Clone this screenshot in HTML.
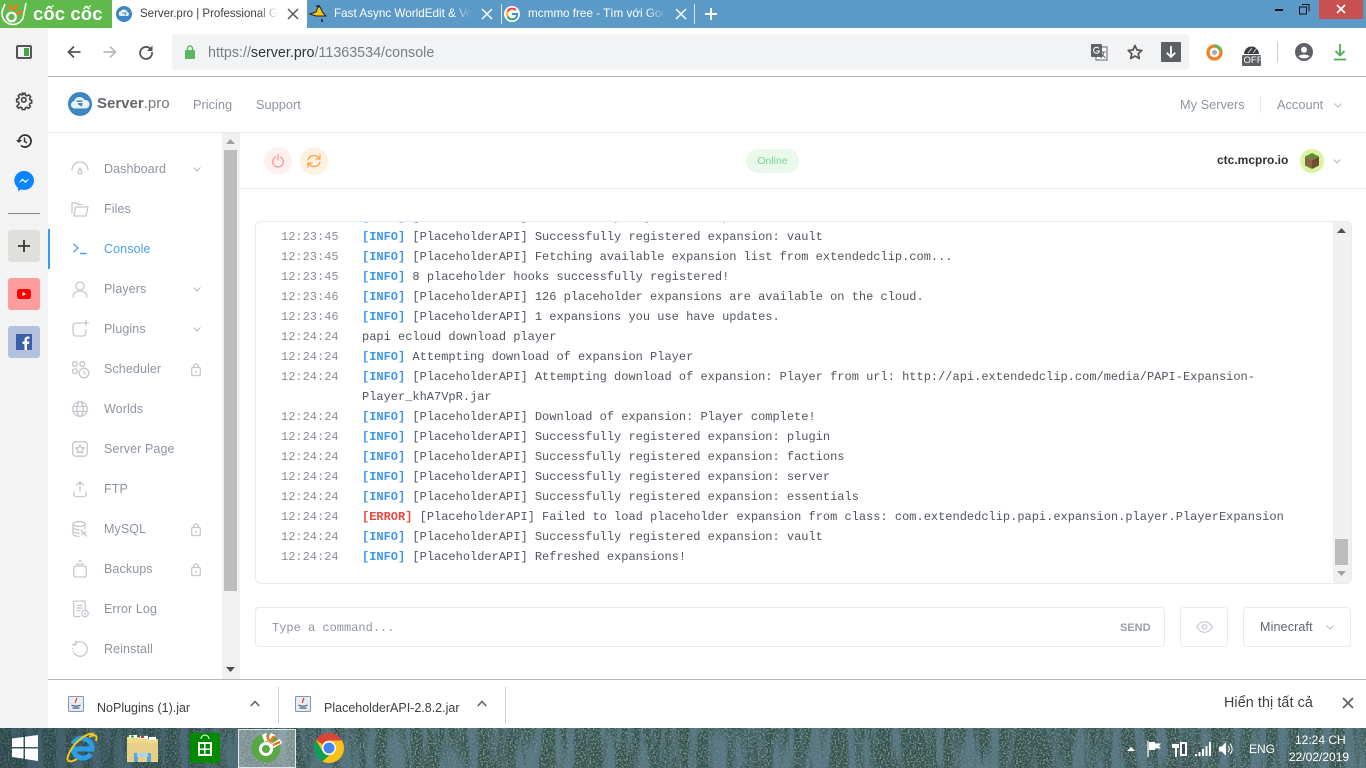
<!DOCTYPE html>
<html><head><meta charset="utf-8"><title>Server.pro</title>
<style>
html,body{margin:0;padding:0;width:1366px;height:768px;overflow:hidden;background:#fff;font-family:"Liberation Sans","Noto Sans CJK SC",sans-serif}
.a{position:absolute}
.t{position:absolute;white-space:pre;line-height:20px}
svg{position:absolute;overflow:visible}
.nav{position:absolute;left:104px;font-size:12.5px;line-height:20px;color:#8d95a0;white-space:pre;letter-spacing:.1px}
.i{fill:none;stroke:#c3c8cf;stroke-width:1.3;stroke-linecap:round;stroke-linejoin:round}
.ln{position:absolute;left:281px;font:12px/20px "Liberation Mono",monospace;white-space:pre;color:#50565e}
.ln u{text-decoration:none;color:#8a8f96;display:inline-block;width:81px}
.ln b{color:#3a97ee}
.ln i{font-style:normal;font-weight:bold;color:#e8483f}
</style></head><body>

<!-- tab strip -->
<div class="a" style="left:0;top:0;width:1366px;height:28px;background:#5b9ac6"></div>
<div class="a" style="left:0;top:0;width:112px;height:28px;background:#5fba4b"></div>
<svg style="left:0;top:0" width="30" height="28" viewBox="0 0 30 28">
<path d="M3 9A10.500 10.500 0 1 0 23 18L26 3" fill="none" stroke="#fff" stroke-width="1.600"/>
<path d="M3 9L5 4" fill="none" stroke="#fff" stroke-width="1.600"/>
<circle cx="11.500" cy="17" r="4.300" fill="none" stroke="#fff" stroke-width="2.200"/>
<path d="M9.500 4l1.800 6M17 4l-3 6M22 11l-6 3" stroke="#f47a20" stroke-width="2.600"/>
</svg>
<div class="t" style="left:33px;top:4px;font-size:18.500px;font-weight:bold;color:#fff;letter-spacing:.1px">cốc cốc</div>

<div class="a" style="left:112px;top:0;width:195px;height:28px;background:#fff"></div>
<svg style="left:116px;top:6px" width="16" height="16" viewBox="0 0 16 16"><circle cx="8" cy="8" r="8" fill="#3c86c4"/><path d="M4 10a2.500 2.500 0 0 1 .6-4.600A3.600 3.600 0 0 1 11 5.600 2.500 2.500 0 0 1 12 10z" fill="#e8f0f6"/><path d="M6 7h4l-1 2.500" stroke="#3c86c4" fill="none"/></svg>
<div class="t" style="left:140px;top:4px;font-size:11.500px;color:#3c4043;width:139px;overflow:hidden;-webkit-mask-image:linear-gradient(90deg,#000 118px,transparent 138px)">Server.pro | Professional Game</div>
<svg style="left:288px;top:9px" width="10" height="10" viewBox="0 0 10 10"><path d="M0 0L10 10M10 0L0 10" stroke="#555" stroke-width="1.500"/></svg>

<svg style="left:310px;top:5px" width="16" height="18" viewBox="0 0 16 18"><path d="M0 9l6-2 2-5h2l3 6 3 3H6z" fill="#f2c811" stroke="#222" stroke-width="1"/><path d="M10 1H6M12 14v3" stroke="#223" stroke-width="1.500"/></svg>
<div class="t" style="left:334px;top:4px;font-size:11.700px;color:#fff;width:138px;overflow:hidden;-webkit-mask-image:linear-gradient(90deg,#000 118px,transparent 138px)">Fast Async WorldEdit &amp; Voxel</div>
<svg style="left:482px;top:9px" width="10" height="10" viewBox="0 0 10 10"><path d="M0 0L10 10M10 0L0 10" stroke="#fff" stroke-width="1.500"/></svg>
<div class="a" style="left:501px;top:4px;width:1px;height:20px;background:#d7e6f1"></div>

<svg style="left:504px;top:6px" width="16" height="16" viewBox="0 0 16 16"><circle cx="8" cy="8" r="8" fill="#fff"/><path d="M12 4.200A5.200 5.200 0 0 0 3.600 5.500" stroke="#ea4335" stroke-width="2" fill="none"/><path d="M3.600 5.500a5.200 5.200 0 0 0 0 5" stroke="#fbbc05" stroke-width="2" fill="none"/><path d="M3.600 10.500a5.200 5.200 0 0 0 8.400 1.300" stroke="#34a853" stroke-width="2" fill="none"/><path d="M8 8h5a5 5 0 0 1-1 3.800" stroke="#4285f4" stroke-width="2" fill="none"/></svg>
<div class="t" style="left:528px;top:4px;font-size:11.700px;color:#fff;width:138px;overflow:hidden;-webkit-mask-image:linear-gradient(90deg,#000 118px,transparent 138px)">mcmmo free - Tìm với Google</div>
<svg style="left:676px;top:9px" width="10" height="10" viewBox="0 0 10 10"><path d="M0 0L10 10M10 0L0 10" stroke="#fff" stroke-width="1.500"/></svg>
<div class="a" style="left:694px;top:4px;width:1px;height:20px;background:#d7e6f1"></div>
<svg style="left:705px;top:8px" width="12" height="12" viewBox="0 0 12 12"><path d="M6 0V12M0 6H12" stroke="#fff" stroke-width="2"/></svg>

<!-- window controls -->
<div class="a" style="left:1275px;top:9px;width:8px;height:2px;background:#111"></div>
<svg style="left:1299px;top:4px" width="11" height="11" viewBox="0 0 11 11"><path d="M3 .5h7v7M.5 3h7v7h-7z" fill="none" stroke="#111"/></svg>
<div class="a" style="left:1319px;top:0;width:44px;height:19px;background:#c75050"></div>
<svg style="left:1337px;top:5px" width="8" height="8" viewBox="0 0 8 8"><path d="M0 0L8 8M8 0L0 8" stroke="#fff" stroke-width="1.600"/></svg>

<!-- left rail -->
<div class="a" style="left:0;top:28px;width:48px;height:700px;background:#f3f3f3"></div>
<svg style="left:16px;top:45px" width="16" height="14" viewBox="0 0 16 14"><rect x="1" y="1" width="14" height="12" rx="1" fill="none" stroke="#555" stroke-width="2"/><rect x="8" y="3" width="5" height="8" fill="#3fa548"/></svg>
<svg style="left:16px;top:93px" width="16" height="16" viewBox="0 0 24 24"><path d="M12 8.500a3.500 3.500 0 1 0 0 7 3.500 3.500 0 0 0 0-7zM10 2h4l.6 3 2.400 1 2.600-1.600 2.800 2.800L20.800 10l.9 2.200 2.300.6v4l-2.600.6-1 2.400 1.500 2.400-2.800 2.800-2.600-1.600-2.300 1-.6 2.600h-4l-.6-2.800-2.400-1-2.500 1.600-2.800-2.800L4.800 18l-1-2.400L1 15v-4l2.800-.6 1-2.300L3.400 5.800l2.800-2.800 2.500 1.600 2.400-1z" transform="translate(0 -1.500) scale(.98)" fill="none" stroke="#444" stroke-width="2.400"/></svg>
<svg style="left:16px;top:133px" width="16" height="16" viewBox="0 0 16 16"><path d="M3 8a6 6 0 1 1 2 4.500" fill="none" stroke="#333" stroke-width="1.800"/><path d="M0 7l3 3 3-3z" fill="#333"/><path d="M8.500 4.500V8.500L11 10" fill="none" stroke="#333" stroke-width="1.400"/></svg>
<svg style="left:14px;top:171px" width="20" height="20" viewBox="0 0 20 20"><path d="M10 0a10 9.500 0 0 1 0 19l-3-.5-3 1.500v-3A9.500 9.500 0 0 1 10 0z" fill="#0a84ff"/><path d="M4.500 12l4-4.500 2.500 2.500 4.500-2.500-4 4.500-2.500-2.500z" fill="#fff"/></svg>
<div class="a" style="left:8px;top:213px;width:32px;height:1px;background:#8a8a8a"></div>
<div class="a" style="left:8px;top:230px;width:32px;height:32px;border-radius:3px;background:#dfdfdb"></div>
<svg style="left:18px;top:240px" width="12" height="12" viewBox="0 0 12 12"><path d="M6 0V12M0 6H12" stroke="#333" stroke-width="1.800"/></svg>
<div class="a" style="left:8px;top:278px;width:32px;height:32px;border-radius:3px;background:#fd9d9d"></div>
<svg style="left:17px;top:289px" width="14" height="10" viewBox="0 0 14 10"><rect width="14" height="10" rx="2.500" fill="#f00"/><path d="M5.500 3v4l3.500-2z" fill="#fff"/></svg>
<div class="a" style="left:8px;top:326px;width:32px;height:32px;border-radius:3px;background:#b3c1dd"></div>
<svg style="left:16px;top:334px" width="16" height="16" viewBox="0 0 16 16"><rect width="16" height="16" fill="#3b5ea8"/><path d="M11 16V10h2l.4-2.500H11V6c0-.8.300-1.200 1.200-1.200h1.300V2.600c-.6-.1-1.200-.1-1.900-.1C10 2.500 8.500 3.700 8.500 5.800v1.700h-2V10h2v6z" fill="#fff"/></svg>

<!-- toolbar -->
<svg style="left:67px;top:45px" width="14" height="14" viewBox="0 0 14 14"><path d="M13.500 7H1.500M7 1.500L1.500 7 7 12.500" fill="none" stroke="#555" stroke-width="1.800"/></svg>
<svg style="left:103px;top:45px" width="14" height="14" viewBox="0 0 14 14"><path d="M.5 7h12M7 1.500L12.500 7 7 12.500" fill="none" stroke="#bbb" stroke-width="1.800"/></svg>
<svg style="left:139px;top:45px" width="14" height="14" viewBox="0 0 14 14"><path d="M12 4.500A6 6 0 1 0 13 7" fill="none" stroke="#555" stroke-width="1.800"/><path d="M13.500 .5V6H8z" fill="#555"/></svg>
<div class="a" style="left:172px;top:34px;width:1017px;height:36px;border-radius:4px;background:#f1f3f4"></div>
<svg style="left:185px;top:45px" width="10" height="14" viewBox="0 0 10 14"><rect y="5" width="10" height="9" rx="1" fill="#5cb85c"/><path d="M2.500 5.500V3.500a2.500 2.500 0 0 1 5 0v2" fill="none" stroke="#5cb85c" stroke-width="1.400"/></svg>
<div class="t" style="left:208px;top:43px;font-size:14.300px;color:#7b7f84"><span style="color:#7b7f84">https://</span><span style="color:#33373b">server.pro</span>/11363534/console</div>
<svg style="left:1091px;top:44px" width="17" height="17" viewBox="0 0 17 17"><rect x="5" y="3" width="11" height="13" fill="#fff" stroke="#5f6368"/><rect x="0" y="0" width="11" height="13" rx="1" fill="#5f6368"/><path d="M8 4.500A3 3 0 1 0 8.500 7H5.500" fill="none" stroke="#fff" stroke-width="1"/><path d="M10 8h5M12.500 8c0 3-1.500 5-3 6M11 10.500l3.500 3.500" fill="none" stroke="#5f6368"/></svg>
<svg style="left:1127px;top:44px" width="16" height="16" viewBox="0 0 16 16"><path d="M8 1.500l2 4.500 4.800.5-3.600 3.200 1.100 4.800L8 12l-4.300 2.500 1.100-4.800L1.200 6.500 6 6z" fill="none" stroke="#555" stroke-width="1.700" stroke-linejoin="round"/></svg>
<div class="a" style="left:1161px;top:42px;width:20px;height:20px;background:#5c5f64;border-radius:1px"></div>
<svg style="left:1166px;top:46px" width="10" height="12" viewBox="0 0 10 12"><path d="M5 0V11M.8 6.800L5 11 9.200 6.800" fill="none" stroke="#fff" stroke-width="1.800"/></svg>
<svg style="left:1206px;top:44px" width="17" height="17" viewBox="0 0 17 17"><circle cx="8.500" cy="8.500" r="6.500" fill="none" stroke="#f47f20" stroke-width="3.200"/><path d="M8.500 2a6.500 6.500 0 0 1 6 4" fill="none" stroke="#5cb85c" stroke-width="3.200"/><circle cx="8.500" cy="8.500" r="2.500" fill="#aaa"/></svg>
<svg style="left:1242px;top:43px" width="19" height="24" viewBox="0 0 19 24"><path d="M2 11a7.500 7.500 0 0 1 15 0z" fill="#3a3d40"/><path d="M6 10l4-5M11 10l4-5" stroke="#ddd"/><rect x="0" y="12" width="19" height="11" rx="1" fill="#5c5f64"/></svg>
<div class="t" style="left:1243.500px;top:55px;font-size:9.500px;line-height:12px;color:#fff">OFF</div>
<div class="a" style="left:1277px;top:42px;width:1px;height:20px;background:#ccc"></div>
<svg style="left:1295px;top:43px" width="18" height="18" viewBox="0 0 18 18"><circle cx="9" cy="9" r="9" fill="#5f6368"/><circle cx="9" cy="6.800" r="3" fill="#fff"/><path d="M3.500 13.500c1.500-2.500 9.500-2.500 11 0-2.500 2.500-8.500 2.500-11 0z" fill="#fff"/></svg>
<svg style="left:1334px;top:44px" width="12" height="17" viewBox="0 0 12 17"><path d="M6 0V11M1.500 7L6 11.500 10.500 7" fill="none" stroke="#4caf50" stroke-width="1.800"/><path d="M0 15.500H12" stroke="#4caf50" stroke-width="1.800"/></svg>
<div class="a" style="left:48px;top:76px;width:1318px;height:1px;background:#b7b7b7"></div>

<!-- page header -->
<svg style="left:68px;top:92px" width="24" height="24" viewBox="0 0 24 24"><circle cx="12" cy="12" r="12" fill="#3c86c4"/><path d="M6 16.500a3.800 3.800 0 0 1 .3-7.500A5.500 5.500 0 0 1 16.500 8a4.300 4.300 0 0 1 1.500 8.500z" fill="#e9f1f7"/><path d="M8 8.500h7l-1 1.500H9zM10 11h4.500l-.5 3.500-4-2z" fill="#3c86c4"/></svg>
<div class="t" style="left:97px;top:94px;font-size:15px;color:#666b70"><b style="color:#63686d">Server</b><span style="color:#777">.pro</span></div>
<div class="t" style="left:193px;top:95px;font-size:12.800px;color:#8d95a0">Pricing</div>
<div class="t" style="left:256px;top:95px;font-size:12.800px;color:#8d95a0">Support</div>
<div class="t" style="left:1180px;top:95px;font-size:12.800px;color:#8d95a0">My Servers</div>
<div class="a" style="left:1260px;top:97px;width:1px;height:16px;background:#e6e8eb"></div>
<div class="t" style="left:1277px;top:95px;font-size:12.800px;color:#8d95a0">Account</div>
<svg style="left:1334px;top:103px" width="8" height="5" viewBox="0 0 8 5"><path d="M.5.500L4 4 7.500.5" fill="none" stroke="#b5bac1"/></svg>
<div class="a" style="left:48px;top:132px;width:1318px;height:1px;background:#e9ebee"></div>

<!-- sidebar -->
<div class="a" style="left:222px;top:133px;width:18px;height:547px;background:#f1f1f1"></div>
<div class="a" style="left:224px;top:150px;width:13px;height:441px;background:#bdbdbd"></div>
<svg style="left:226px;top:139px" width="9" height="5" viewBox="0 0 9 5"><path d="M0 5L4.500 0 9 5z" fill="#a3a3a3"/></svg>
<svg style="left:226px;top:667px" width="9" height="5" viewBox="0 0 9 5"><path d="M0 0L4.500 5 9 0z" fill="#505050"/></svg>
<div class="a" style="left:48px;top:229px;width:2px;height:40px;background:#3b99f0"></div>

<svg style="left:71px;top:160px" width="18" height="18" viewBox="0 0 18 18"><g class="i"><path d="M1 10a8 8 0 0 1 16 0"/><path d="M9 8l-1.800 4a1.800 1.800 0 1 0 3.600 0z"/></g></svg>
<div class="nav" style="top:159px">Dashboard</div>
<svg style="left:71px;top:201px" width="18" height="16" viewBox="0 0 18 16"><g class="i"><path d="M1 12V2h5l1 1.500h4"/><path d="M3 15L4.500 6H17l-2 9z"/></g></svg>
<div class="nav" style="top:199px">Files</div>
<svg style="left:73px;top:243px" width="14" height="12" viewBox="0 0 14 12"><path d="M.5 1L5 5 .5 9" fill="none" stroke="#4aa0f2" stroke-width="1.300"/><path d="M7 10.500h6.500" stroke="#4aa0f2" stroke-width="1.500"/></svg>
<div class="nav" style="top:239px;color:#4aa0f2">Console</div>
<svg style="left:72px;top:281px" width="16" height="16" viewBox="0 0 16 16"><g class="i"><circle cx="8" cy="5" r="4"/><path d="M1 16c0-4 3-6 7-6s7 2 7 6"/></g></svg>
<div class="nav" style="top:279px">Players</div>
<svg style="left:72px;top:320px" width="18" height="17" viewBox="0 0 18 17"><g class="i"><path d="M10 3H4a3 3 0 0 0-3 3v7a3 3 0 0 0 3 3h7a3 3 0 0 0 3-3v-3"/><path d="M14 .5v5M11.500 3h5"/></g></svg>
<div class="nav" style="top:319px">Plugins</div>
<svg style="left:72px;top:361px" width="18" height="18" viewBox="0 0 18 18"><g class="i"><rect x=".7" y=".7" width="4.500" height="4.500" rx="1.500"/><rect x="8" y=".7" width="4.500" height="4.500" rx="1.500"/><rect x=".7" y="8" width="4.500" height="4.500" rx="1.500"/><circle cx="12" cy="12" r="4.800"/><path d="M12 10v2l1.500 1"/></g></svg>
<div class="nav" style="top:359px">Scheduler</div>
<svg style="left:72px;top:401px" width="16" height="16" viewBox="0 0 16 16"><g class="i"><circle cx="8" cy="8" r="7.300"/><ellipse cx="8" cy="8" rx="3.200" ry="7.300"/><path d="M1 5.500h14M1 10.500h14"/></g></svg>
<div class="nav" style="top:399px">Worlds</div>
<svg style="left:72px;top:441px" width="16" height="16" viewBox="0 0 16 16"><g class="i"><rect x=".7" y=".7" width="14.500" height="14.500" rx="3"/><path d="M8 3.500l1.300 3 3.200.3-2.400 2.200.7 3.200L8 10.500l-2.800 1.700.7-3.200-2.400-2.200 3.200-.3z"/></g></svg>
<div class="nav" style="top:439px">Server Page</div>
<svg style="left:73px;top:481px" width="14" height="16" viewBox="0 0 14 16"><g class="i"><path d="M7 10V1M3.500 4L7 .7 10.500 4"/><path d="M1 11v2.500a2 2 0 0 0 2 2h8a2 2 0 0 0 2-2V11"/></g></svg>
<div class="nav" style="top:479px">FTP</div>
<svg style="left:72px;top:521px" width="16" height="16" viewBox="0 0 16 16"><g class="i"><ellipse cx="7" cy="3" rx="6" ry="2.300"/><path d="M1 3v10c0 1.300 2.700 2.300 6 2.300M13 3v5M1 6.500c0 1.300 2.700 2.300 6 2.300M1 10c0 1.300 2.700 2.300 6 2.300M9 9l5.500 6M10 13l4-2"/></g></svg>
<div class="nav" style="top:519px">MySQL</div>
<svg style="left:73px;top:560px" width="14" height="18" viewBox="0 0 14 18"><g class="i"><rect x=".8" y="6" width="12.500" height="11" rx="2"/><path d="M3.500 4H10.500M5.500 1H8.500"/></g></svg>
<div class="nav" style="top:559px">Backups</div>
<svg style="left:73px;top:600px" width="16" height="18" viewBox="0 0 16 18"><g class="i"><path d="M4 1H2a1.300 1.300 0 0 0-1.300 1.300v13A1.300 1.300 0 0 0 2 16.500h5M9 1h2a1.300 1.300 0 0 1 1.300 1.300V9"/><path d="M5 1h1M7.500 1h.5M4 5.500h5M4 8h5M4 10.500h3"/><circle cx="12" cy="13.500" r="3.300"/><path d="M12 12.500v2"/></g></svg>
<div class="nav" style="top:599px">Error Log</div>
<svg style="left:72px;top:641px" width="16" height="16" viewBox="0 0 16 16"><g class="i"><path d="M2.500 3.500A7.200 7.200 0 1 1 2 12"/><path d="M4 0v3.800H.5M.7 7.500H1M1 10H1.200"/></g></svg>
<div class="nav" style="top:639px">Reinstall</div>

<svg style="left:193px;top:167px" width="8" height="5" viewBox="0 0 8 5"><path d="M.5.500L4 4 7.500.5" fill="none" stroke="#b5bac1"/></svg>
<svg style="left:193px;top:287px" width="8" height="5" viewBox="0 0 8 5"><path d="M.5.500L4 4 7.500.5" fill="none" stroke="#b5bac1"/></svg>
<svg style="left:193px;top:327px" width="8" height="5" viewBox="0 0 8 5"><path d="M.5.500L4 4 7.500.5" fill="none" stroke="#b5bac1"/></svg>
<svg style="left:191px;top:363px" width="10" height="13" viewBox="0 0 10 13"><g class="i"><rect x=".7" y="4.500" width="8.600" height="8" rx="1.200"/><path d="M2.800 4.500V3a2.200 2.200 0 0 1 4.400 0v1.500M5 8v1.500"/></g></svg>
<svg style="left:191px;top:523px" width="10" height="13" viewBox="0 0 10 13"><g class="i"><rect x=".7" y="4.500" width="8.600" height="8" rx="1.200"/><path d="M2.800 4.500V3a2.200 2.200 0 0 1 4.400 0v1.500M5 8v1.500"/></g></svg>
<svg style="left:191px;top:563px" width="10" height="13" viewBox="0 0 10 13"><g class="i"><rect x=".7" y="4.500" width="8.600" height="8" rx="1.200"/><path d="M2.800 4.500V3a2.200 2.200 0 0 1 4.400 0v1.500M5 8v1.500"/></g></svg>

<!-- top action bar -->
<div class="a" style="left:264px;top:147px;width:28px;height:28px;border-radius:50%;background:#fff0f0"></div>
<svg style="left:272px;top:154px" width="12" height="14" viewBox="0 0 12 14"><path d="M3.500 3a5.300 5.300 0 1 0 5 0M6 .5V6" fill="none" stroke="#f98f8f" stroke-width="1.200" stroke-linecap="round"/></svg>
<div class="a" style="left:300px;top:147px;width:28px;height:28px;border-radius:50%;background:#fff1e2"></div>
<svg style="left:307px;top:154px" width="14" height="14" viewBox="0 0 14 14"><g fill="none" stroke="#fba24a" stroke-width="1.300" stroke-linecap="round" stroke-linejoin="round"><path d="M1 6a6 5.500 0 0 1 10.500-2.500L13 5M13 1v4H9"/><path d="M13 8a6 5.500 0 0 1-10.500 2.500L1 9M1 13V9h4"/></g></svg>
<div class="a" style="left:746px;top:149px;width:53px;height:24px;border-radius:12px;background:#e9f9ec"></div>
<div class="t" style="left:746px;top:151px;width:53px;text-align:center;font-size:10.500px;color:#79d48a">Online</div>
<div class="t" style="left:1217px;top:150px;font-size:12px;font-weight:bold;color:#2d3136">ctc.mcpro.io</div>
<div class="a" style="left:1300px;top:149px;width:24px;height:24px;border-radius:50%;background:#d9f3a0"></div>
<svg style="left:1305px;top:153px" width="14" height="16" viewBox="0 0 14 16"><path d="M7 0l7 3.500L7 7 0 3.500z" fill="#5c8a35"/><path d="M0 3.500L7 7v9L0 12.500z" fill="#8a6645"/><path d="M14 3.500L7 7v9l7-3.500z" fill="#6e4f33"/></svg>
<svg style="left:1333px;top:159px" width="8" height="5" viewBox="0 0 8 5"><path d="M.5.500L4 4 7.500.5" fill="none" stroke="#b5bac1"/></svg>
<div class="a" style="left:240px;top:188px;width:1126px;height:1px;background:#e9ebee"></div>

<!-- console -->
<div class="a" style="left:255px;top:221px;width:1095px;height:361px;border:1px solid #e8ebef;border-radius:6px"></div>
<div class="a" style="left:1333px;top:222px;width:18px;height:361px;background:#f0f0f0;border-radius:0 5px 5px 0"></div>
<div class="a" style="left:1335px;top:539px;width:13px;height:26px;background:#bdbdbd"></div>
<svg style="left:1337px;top:228px" width="9" height="5" viewBox="0 0 9 5"><path d="M0 5L4.500 0 9 5z" fill="#505050"/></svg>
<svg style="left:1337px;top:571px" width="9" height="5" viewBox="0 0 9 5"><path d="M0 0L4.500 5 9 0z" fill="#a3a3a3"/></svg>
<div class="a" style="left:256px;top:222px;width:1077px;height:358px;overflow:hidden">
<div style="position:absolute;left:-256px;top:-222px;width:1366px;height:768px">
<div class="ln" style="top:207px"><u>12:23:45</u><b>[INFO]</b> [PlaceholderAPI] Successfully registered expansion: server</div>
<div class="ln" style="top:227px"><u>12:23:45</u><b>[INFO]</b> [PlaceholderAPI] Successfully registered expansion: vault</div>
<div class="ln" style="top:247px"><u>12:23:45</u><b>[INFO]</b> [PlaceholderAPI] Fetching available expansion list from extendedclip.com...</div>
<div class="ln" style="top:267px"><u>12:23:45</u><b>[INFO]</b> 8 placeholder hooks successfully registered!</div>
<div class="ln" style="top:287px"><u>12:23:46</u><b>[INFO]</b> [PlaceholderAPI] 126 placeholder expansions are available on the cloud.</div>
<div class="ln" style="top:307px"><u>12:23:46</u><b>[INFO]</b> [PlaceholderAPI] 1 expansions you use have updates.</div>
<div class="ln" style="top:327px"><u>12:24:24</u>papi ecloud download player</div>
<div class="ln" style="top:347px"><u>12:24:24</u><b>[INFO]</b> Attempting download of expansion Player</div>
<div class="ln" style="top:367px"><u>12:24:24</u><b>[INFO]</b> [PlaceholderAPI] Attempting download of expansion: Player from url: http://api.extendedclip.com/media/PAPI-Expansion-</div>
<div class="ln" style="top:387px"><u></u>Player_khA7VpR.jar</div>
<div class="ln" style="top:407px"><u>12:24:24</u><b>[INFO]</b> [PlaceholderAPI] Download of expansion: Player complete!</div>
<div class="ln" style="top:427px"><u>12:24:24</u><b>[INFO]</b> [PlaceholderAPI] Successfully registered expansion: plugin</div>
<div class="ln" style="top:447px"><u>12:24:24</u><b>[INFO]</b> [PlaceholderAPI] Successfully registered expansion: factions</div>
<div class="ln" style="top:467px"><u>12:24:24</u><b>[INFO]</b> [PlaceholderAPI] Successfully registered expansion: server</div>
<div class="ln" style="top:487px"><u>12:24:24</u><b>[INFO]</b> [PlaceholderAPI] Successfully registered expansion: essentials</div>
<div class="ln" style="top:507px"><u>12:24:24</u><i>[ERROR]</i> [PlaceholderAPI] Failed to load placeholder expansion from class: com.extendedclip.papi.expansion.player.PlayerExpansion</div>
<div class="ln" style="top:527px"><u>12:24:24</u><b>[INFO]</b> [PlaceholderAPI] Successfully registered expansion: vault</div>
<div class="ln" style="top:547px"><u>12:24:24</u><b>[INFO]</b> [PlaceholderAPI] Refreshed expansions!</div>
</div></div>

<!-- command input -->
<div class="a" style="left:255px;top:607px;width:908px;height:38px;border:1px solid #e8ebef;border-radius:4px"></div>
<div class="t" style="left:272px;top:618px;font:12px/20px 'Liberation Mono',monospace;color:#8f959c">Type a command...</div>
<div class="t" style="left:1120px;top:618px;font-size:11px;font-weight:bold;color:#98a0aa">SEND</div>
<div class="a" style="left:1180px;top:607px;width:46px;height:38px;border:1px solid #e8ebef;border-radius:4px"></div>
<svg style="left:1196px;top:621px" width="17" height="12" viewBox="0 0 17 12"><path d="M.7 6C3 2 5.500.7 8.500.7S14 2 16.300 6C14 10 11.500 11.300 8.500 11.300S3 10 .7 6z" fill="none" stroke="#c3c8cf" stroke-width="1.200"/><circle cx="8.500" cy="6" r="2.300" fill="none" stroke="#c3c8cf" stroke-width="1.200"/></svg>
<div class="a" style="left:1243px;top:607px;width:106px;height:38px;border:1px solid #e8ebef;border-radius:4px"></div>
<div class="t" style="left:1260px;top:617px;font-size:12.500px;color:#5f666e;letter-spacing:.15px">Minecraft</div>
<svg style="left:1326px;top:625px" width="8" height="5" viewBox="0 0 8 5"><path d="M.5.500L4 4 7.500.5" fill="none" stroke="#b5bac1"/></svg>

<!-- download shelf -->
<div class="a" style="left:48px;top:679px;width:1318px;height:1px;background:#b7b7b7"></div>
<svg style="left:68px;top:696px" width="16" height="16" viewBox="0 0 16 16"><rect x=".5" y=".5" width="15" height="15" rx="1" fill="#e8edf3" stroke="#8796a8"/><path d="M8.500 2c1 2-2 3-.8 5" fill="none" stroke="#d8402b" stroke-width="1.200"/><path d="M3.500 9c2 1.500 7 1.500 9 0M4.500 12h7" fill="none" stroke="#3f5f85" stroke-width="1.200"/></svg>
<div class="t" style="left:97px;top:698px;font-size:12.500px;color:#3c4043">NoPlugins (1).jar</div>
<svg style="left:250px;top:700px" width="10" height="7" viewBox="0 0 10 7"><path d="M.8 6L5 1.500 9.200 6" fill="none" stroke="#5f6368" stroke-width="1.600"/></svg>
<div class="a" style="left:278px;top:687px;width:1px;height:36px;background:#ccc"></div>
<svg style="left:295px;top:696px" width="16" height="16" viewBox="0 0 16 16"><rect x=".5" y=".5" width="15" height="15" rx="1" fill="#e8edf3" stroke="#8796a8"/><path d="M8.500 2c1 2-2 3-.8 5" fill="none" stroke="#d8402b" stroke-width="1.200"/><path d="M3.500 9c2 1.500 7 1.500 9 0M4.500 12h7" fill="none" stroke="#3f5f85" stroke-width="1.200"/></svg>
<div class="t" style="left:324px;top:698px;font-size:12.500px;color:#3c4043">PlaceholderAPI-2.8.2.jar</div>
<svg style="left:477px;top:700px" width="10" height="7" viewBox="0 0 10 7"><path d="M.8 6L5 1.500 9.200 6" fill="none" stroke="#5f6368" stroke-width="1.600"/></svg>
<div class="a" style="left:505px;top:687px;width:1px;height:36px;background:#ccc"></div>
<div class="t" style="left:1224px;top:693px;font-size:14.300px;color:#3c4043;letter-spacing:.1px">Hiển thị tất cả</div>
<svg style="left:1343px;top:698px" width="10" height="10" viewBox="0 0 10 10"><path d="M0 0L10 10M10 0L0 10" stroke="#5f6368" stroke-width="1.800"/></svg>

<!-- taskbar -->
<svg style="left:0;top:728px" width="1366" height="40" viewBox="0 0 1366 40">
<defs>
<filter id="nz" x="0" y="0" width="100%" height="100%"><feTurbulence type="fractalNoise" baseFrequency=".6" numOctaves="2" seed="4"/><feColorMatrix values="0 0 0 0 .45  0 0 0 0 .56  0 0 0 0 .42  0 0 0 3.200 -1.400"/></filter>
<filter id="st" x="0" y="0" width="100%" height="100%"><feTurbulence type="fractalNoise" baseFrequency=".09 .012" numOctaves="2" seed="9"/><feColorMatrix values="0 0 0 0 .14  0 0 0 0 .25  0 0 0 0 .31  0 0 0 5 -2.200"/></filter>
<linearGradient id="sh" x1="0" x2="1" y1="0" y2="0"><stop offset="0" stop-color="#1e3a46" stop-opacity=".5"/><stop offset=".3" stop-color="#1e3a46" stop-opacity=".08"/><stop offset="1" stop-color="#1e3a46" stop-opacity=".12"/></linearGradient>
</defs>
<rect width="1366" height="40" fill="#33504f"/>
<rect width="1366" height="40" filter="url(#nz)" opacity=".75"/>
<rect width="1366" height="40" filter="url(#st)" opacity=".75"/>
<rect width="1366" height="40" fill="url(#sh)"/>
</svg>
<svg style="left:12px;top:735px" width="26" height="26" viewBox="0 0 26 26"><path d="M0 3.500L11.500 2V12H0zM13 1.800L26 0V12H13zM0 13.500H11.500V23.500L0 22zM13 13.500H26V26L13 24z" fill="#fff"/></svg>
<svg style="left:66px;top:732px" width="32" height="32" viewBox="0 0 32 32"><path d="M7 17h19a10 10 0 0 0-19-5M7 17a10 10 0 0 0 18 5" fill="none" stroke="#2b9fe4" stroke-width="5"/><path d="M28 2C20 0 6 12 2 24c-2 6 2 7 9 3M23 5c6-3 9-2 7 4" fill="none" stroke="#f5c518" stroke-width="2"/></svg>
<svg style="left:127px;top:733px" width="32" height="30" viewBox="0 0 32 30"><path d="M0 4h12l2 2h17v23H0z" fill="#f1d98a"/><path d="M2 2h8v3H2zM13 3h8v3h-8z" fill="#fff"/><rect x="4" y="2.500" width="3" height="2" fill="#3a3"/><rect x="14" y="3" width="3" height="2" fill="#c33"/><rect x="22" y="4" width="7" height="3" fill="#fff"/><path d="M0 10h31v18H0z" fill="#e8cf88"/><path d="M7 29V20h17v9h-4v-5h-9v5z" fill="#5ba4d4"/><path d="M10 20h11v4H10z" fill="#a8d4ef"/></svg>
<div class="a" style="left:190px;top:733px;width:30px;height:30px;background:#008a00"></div>
<svg style="left:190px;top:733px" width="30" height="30" viewBox="0 0 30 30"><path d="M11 6a4 4 0 0 1 8 0" fill="none" stroke="#fff" stroke-width="1"/><path d="M8 9h14v14H8z" fill="#fff"/><path d="M10 11h4v4.500h-4zM15.500 11H20v4.500h-4.500zM10 17h4v4h-4zM15.500 17H20v4h-4.500z" fill="#008a00"/></svg>
<div class="a" style="left:238px;top:729px;width:56px;height:37px;background:rgba(215,225,228,.45);border:1px solid rgba(255,255,255,.75)"></div>
<svg style="left:251px;top:733px" width="32" height="30" viewBox="0 0 32 30"><circle cx="15" cy="15" r="14.500" fill="#5aa845"/><circle cx="15" cy="16" r="5.500" fill="none" stroke="#fff" stroke-width="3"/><path d="M13 1l3 7M22 1l-4 8M30 8l-9 5" stroke="#fff" stroke-width="5"/><path d="M16 2l2 6M23 3l-4 6M29 9l-7 3" stroke="#f0731e" stroke-width="2.500"/></svg>
<svg style="left:314px;top:733px" width="30" height="30" viewBox="0 0 30 30"><circle cx="15" cy="15" r="15" fill="#fbc116"/><path d="M15 0A15 15 0 0 1 28 7.500H15a7.500 7.500 0 0 0-6.500 3.700L2 7A15 15 0 0 1 15 0z" fill="#db4437"/><path d="M2 7l6.500 11.300A7.500 7.500 0 0 0 15 22.500l-6.500 6A15 15 0 0 1 2 7z" fill="#0f9d58"/><circle cx="15" cy="15" r="7" fill="#fff"/><circle cx="15" cy="15" r="5.500" fill="#4285f4"/></svg>

<svg style="left:1127px;top:747px" width="8" height="4" viewBox="0 0 8 4"><path d="M0 4L4 0 8 4z" fill="#fff"/></svg>
<svg style="left:1147px;top:741px" width="16" height="16" viewBox="0 0 16 16"><path d="M1 0V16" stroke="#fff" stroke-width="1.300"/><path d="M2 1h6v1.500h6l-2 2.500 2 2.500H8V9H2z" fill="#fff"/></svg>
<svg style="left:1172px;top:741px" width="15" height="16" viewBox="0 0 15 16"><path d="M2 0v3M5 0v3M0 3h7v4H5v9H3V7H0z" fill="#fff"/><rect x="8.500" y="1.500" width="6" height="13" fill="#fff" stroke="#fff"/><rect x="10" y="3" width="3" height="10" fill="#395058"/></svg>
<svg style="left:1195px;top:742px" width="16" height="14" viewBox="0 0 16 14"><path d="M0 12h2v2H0zM3.500 10h2v4h-2zM7 7h2v7H7zM10.500 4h2v10h-2zM14 0h2v14h-2z" fill="#fff"/></svg>
<svg style="left:1219px;top:742px" width="14" height="14" viewBox="0 0 14 14"><path d="M0 4.500h3L7 0v14L3 9.500H0z" fill="#fff"/><path d="M9 4a4 4 0 0 1 0 6M11 2a7 7 0 0 1 0 10" fill="none" stroke="#fff"/></svg>
<div class="t" style="left:1249px;top:739px;font-size:12px;color:#fff">ENG</div>
<div class="t" style="left:1295px;top:731px;font-size:12px;line-height:18px;color:#fff">12:24 CH</div>
<div class="t" style="left:1289px;top:748px;font-size:12px;line-height:18px;color:#fff">22/02/2019</div>

</body></html>
